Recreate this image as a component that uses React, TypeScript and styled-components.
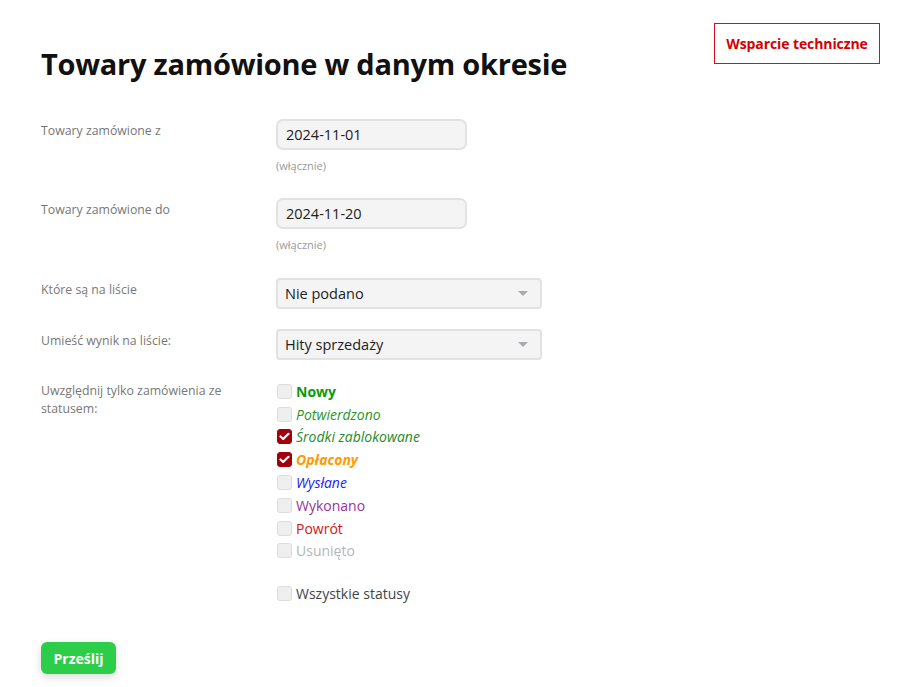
import React from "react";
import styled, { createGlobalStyle } from "styled-components";

const Global = createGlobalStyle`
  html, body { margin: 0; padding: 0; background: #fff; }
  body { font-family: "Open Sans", "Noto Sans", sans-serif; color: #333; }
  * { box-sizing: border-box; }
`;

const Page = styled.div`
  padding: 22px 40px 20px 41px;
`;

const Header = styled.header`
  display: flex;
  justify-content: space-between;
  align-items: flex-start;
`;

const Title = styled.h1`
  margin: 22px 0 0;
  font-size: 29px;
  font-weight: 700;
  color: #111;
  letter-spacing: -0.25px;
  line-height: 40px;
`;

const SupportButton = styled.a`
  display: flex;
  align-items: center;
  justify-content: center;
  width: 166px;
  height: 41px;
  margin-top: 1px;
  border: 1px solid #d4101d;
  color: #d40000;
  font-weight: 700;
  font-size: 14px;
  letter-spacing: -0.1px;
  text-decoration: none;
  cursor: pointer;
`;

const Form = styled.form`
  margin-top: 35px;
`;

const Row = styled.div<{ $gap: number }>`
  display: grid;
  grid-template-columns: 235px 1fr;
  margin-bottom: ${(p) => p.$gap}px;
`;

const Label = styled.div`
  font-size: 12.3px;
  color: #777;
  line-height: 18px;
  padding-top: 3px;
  padding-right: 10px;
`;

const Field = styled.div`
  display: flex;
  flex-direction: column;
  align-items: flex-start;
`;

const DateInput = styled.div`
  width: 191px;
  height: 31px;
  background: #f4f4f4;
  border: 2px solid #e2e2e2;
  border-radius: 7px;
  display: flex;
  align-items: center;
  padding-left: 8px;
  font-size: 14.5px;
  color: #222;
`;

const Hint = styled.div`
  font-size: 11px;
  color: #999;
  margin-top: 8px;
  line-height: 15px;
`;

const Select = styled.div`
  width: 266px;
  height: 31px;
  background: #f4f4f4;
  border: 2px solid #e2e2e2;
  border-radius: 4px;
  display: flex;
  align-items: center;
  justify-content: space-between;
  padding: 0 12px 0 7px;
  font-size: 14.5px;
  color: #222;
`;

const Arrow = styled.span`
  width: 0;
  height: 0;
  border-left: 5px solid transparent;
  border-right: 5px solid transparent;
  border-top: 5px solid #a9a9b0;
`;

const CheckList = styled.div`
  display: flex;
  flex-direction: column;
  margin-top: 1px;
`;

const CheckRow = styled.label<{ $gapTop?: number }>`
  display: flex;
  align-items: center;
  height: 22.8px;
  margin-top: ${(p) => p.$gapTop ?? 0}px;
  font-size: 14px;
`;

const Box = styled.span<{ $checked?: boolean }>`
  width: 15px;
  height: 15px;
  border-radius: 3px;
  margin: 0 4px 0 1px;
  display: flex;
  align-items: center;
  justify-content: center;
  background: ${(p) => (p.$checked ? "#a3000b" : "#efefef")};
  border: 1px solid ${(p) => (p.$checked ? "#a3000b" : "#dcdcdc")};
`;

const StatusText = styled.span<{ $color: string; $bold?: boolean; $italic?: boolean }>`
  color: ${(p) => p.$color};
  font-weight: ${(p) => (p.$bold ? 700 : 400)};
  font-style: ${(p) => (p.$italic ? "italic" : "normal")};
`;

const Submit = styled.button`
  margin-top: 37px;
  width: 75px;
  height: 32px;
  border: none;
  border-radius: 6px;
  background: #2ccd48;
  color: #fff;
  font-family: inherit;
  font-weight: 700;
  font-size: 14px;
  box-shadow: 0 3px 8px rgba(0, 0, 0, 0.15);
  cursor: pointer;
`;

const Check = () => (
  <svg width="11" height="9" viewBox="0 0 11 9">
    <path d="M1.5 4.5 L4.2 7 L9.5 1.8" stroke="#fff" strokeWidth="2.2" fill="none" strokeLinecap="round" strokeLinejoin="round" />
  </svg>
);

type Status = { text: string; color: string; bold?: boolean; italic?: boolean; checked?: boolean };

const statuses: Status[] = [
  { text: "Nowy", color: "#0a9a0a", bold: true },
  { text: "Potwierdzono", color: "#2a962a", italic: true },
  { text: "Środki zablokowane", color: "#1f8a2a", italic: true, checked: true },
  { text: "Opłacony", color: "#ff9a00", bold: true, italic: true, checked: true },
  { text: "Wysłane", color: "#2222ff", italic: true },
  { text: "Wykonano", color: "#993399" },
  { text: "Powrót", color: "#dd1111" },
  { text: "Usunięto", color: "#b5b5b5" },
];

export default function App() {
  return (
    <Page>
      <Global />
      <Header>
        <Title>Towary zamówione w danym okresie</Title>
        <SupportButton>Wsparcie techniczne</SupportButton>
      </Header>
      <Form onSubmit={(e) => e.preventDefault()}>
        <Row $gap={25}>
          <Label>Towary zamówione z</Label>
          <Field>
            <DateInput>2024-11-01</DateInput>
            <Hint>(włącznie)</Hint>
          </Field>
        </Row>
        <Row $gap={26}>
          <Label>Towary zamówione do</Label>
          <Field>
            <DateInput>2024-11-20</DateInput>
            <Hint>(włącznie)</Hint>
          </Field>
        </Row>
        <Row $gap={20}>
          <Label>Które są na liście</Label>
          <Field>
            <Select>
              Nie podano
              <Arrow />
            </Select>
          </Field>
        </Row>
        <Row $gap={19}>
          <Label>Umieść wynik na liście:</Label>
          <Field>
            <Select>
              Hity sprzedaży
              <Arrow />
            </Select>
          </Field>
        </Row>
        <Row $gap={0}>
          <Label>Uwzględnij tylko zamówienia ze statusem:</Label>
          <CheckList>
            {statuses.map((s) => (
              <CheckRow key={s.text}>
                <Box $checked={s.checked}>{s.checked && <Check />}</Box>
                <StatusText $color={s.color} $bold={s.bold} $italic={s.italic}>
                  {s.text}
                </StatusText>
              </CheckRow>
            ))}
            <CheckRow $gapTop={20}>
              <Box />
              <StatusText $color="#444">Wszystkie statusy</StatusText>
            </CheckRow>
          </CheckList>
        </Row>
        <Submit type="submit">Prześlij</Submit>
      </Form>
    </Page>
  );
}
